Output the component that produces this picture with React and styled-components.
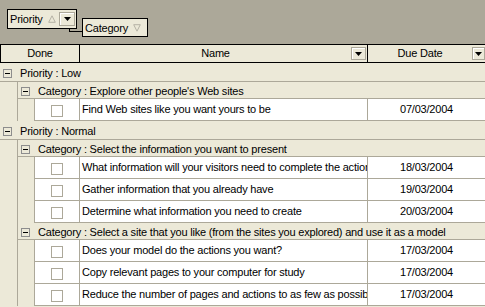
import React from 'react';
import styled, { createGlobalStyle } from 'styled-components';

const GlobalStyle = createGlobalStyle`
  html, body {
    margin: 0;
    padding: 0;
  }
  body {
    width: 485px;
    height: 307px;
    overflow: hidden;
    background: #ece9d8;
    font-family: 'Liberation Sans', Arial, sans-serif;
    font-size: 11px;
    letter-spacing: -0.2px;
    color: #000;
  }
`;

const GroupByPanel = styled.div`
  height: 44px;
  box-sizing: border-box;
  padding: 9px 0 0 7px;
  background: #aca899;
  display: flex;
  align-items: flex-start;
`;

const Chip = styled.div`
  position: relative;
  box-sizing: border-box;
  width: ${p => p.$width}px;
  height: ${p => p.$height}px;
  margin-top: ${p => p.$top || 0}px;
  margin-left: ${p => p.$left || 0}px;
  padding-left: 2px;
  border: 1px solid #000;
  background: #ece9d8;
  display: flex;
  align-items: center;

  ${p =>
    p.$linked &&
    `
    &::before {
      content: '';
      position: absolute;
      left: -14px;
      top: 9px;
      width: 12px;
      height: 3px;
      border-left: 1px solid #000;
      border-bottom: 1px solid #000;
    }
  `}
`;

const ChipLabel = styled.span`
  flex: 1;
  white-space: nowrap;
`;

const SortGlyph = styled.svg`
  display: block;
  flex: none;
  margin-right: ${p => p.$gap}px;
`;

const DropButton = styled.div`
  box-sizing: border-box;
  flex: none;
  width: ${p => p.$w}px;
  height: ${p => p.$h}px;
  margin-right: ${p => p.$right || 0}px;
  border: 1px solid #aca899;
  background: #ece9d8;
  box-shadow: inset 1px 1px 0 #fff;
  display: flex;
  align-items: center;
  justify-content: center;
`;

const HeaderRow = styled.div`
  display: flex;
  height: 19px;
  box-sizing: border-box;
  border-top: 1px solid #000;
  border-bottom: 1px solid #000;
  border-left: 1px solid #000;
`;

const HeaderCell = styled.div`
  box-sizing: border-box;
  width: ${p => (p.$width ? `${p.$width}px` : 'auto')};
  flex: ${p => (p.$width ? 'none' : 1)};
  border-right: ${p => (p.$last ? 'none' : '1px solid #000')};
  display: flex;
  align-items: center;
  line-height: 17px;
`;

const HeaderLabel = styled.span`
  flex: 1;
  text-align: center;
`;

const PriorityRow = styled.div`
  height: 19px;
  box-sizing: border-box;
  border-bottom: 1px solid #aca899;
  padding: 3px 0 0 3px;
  display: flex;
  align-items: center;
  line-height: 13px;
  white-space: nowrap;
`;

const CategoryRow = styled(PriorityRow)`
  height: 17px;
  padding-top: 2px;
`;

const Nested = styled.div`
  padding-left: ${p => p.$indent}px;
`;

const CategoryGroup = styled.div`
  border-left: 1px solid #aca899;
`;

const Expander = styled.span`
  box-sizing: border-box;
  flex: none;
  width: 9px;
  height: 9px;
  margin-right: 8px;
  border: 1px solid #8d8d8d;
  display: flex;
  align-items: center;
  justify-content: center;

  &::after {
    content: '';
    width: 5px;
    height: 1px;
    background: #000;
  }
`;

const TaskRow = styled.div`
  display: flex;
  height: 22px;
  box-sizing: border-box;
  border-left: 1px solid #aca899;
  border-bottom: 1px solid #aca899;
  background: #fff;
  line-height: 20px;
`;

const TaskCell = styled.div`
  box-sizing: border-box;
  width: ${p => (p.$width ? `${p.$width}px` : 'auto')};
  flex: ${p => (p.$width ? 'none' : 1)};
  min-width: 0;
  border-right: ${p => (p.$last ? 'none' : '1px solid #aca899')};
  padding-left: ${p => p.$pad || 0}px;
  text-align: ${p => p.$align || 'left'};
  white-space: nowrap;
  overflow: hidden;
  display: ${p => (p.$check ? 'flex' : 'block')};
  align-items: center;
  justify-content: center;
`;

const CheckBox = styled.span`
  box-sizing: border-box;
  width: 12px;
  height: 12px;
  margin-top: 3px;
  border: 1px solid #aca899;
  background: #fff;
`;

const DownArrow = () => (
  <svg width="7" height="4" viewBox="0 0 7 4">
    <path d="M0 0h7L3.5 4z" fill="#000" />
  </svg>
);

const groups = [
  {
    priority: 'Low',
    categories: [
      {
        name: "Explore other people's Web sites",
        tasks: [['Find Web sites like you want yours to be', '07/03/2004']]
      }
    ]
  },
  {
    priority: 'Normal',
    categories: [
      {
        name: 'Select the information you want to present',
        tasks: [
          ['What information will your visitors need to complete the actions?', '18/03/2004'],
          ['Gather information that you already have', '19/03/2004'],
          ['Determine what information you need to create', '20/03/2004']
        ]
      },
      {
        name: 'Select a site that you like (from the sites you explored) and use it as a model',
        tasks: [
          ['Does your model do the actions you want?', '17/03/2004'],
          ['Copy relevant pages to your computer for study', '17/03/2004'],
          ['Reduce the number of pages and actions to as few as possible', '17/03/2004']
        ]
      }
    ]
  }
];

export default function App() {
  return (
    <>
      <GlobalStyle />
      <GroupByPanel>
        <Chip $width={70} $height={20}>
          <ChipLabel>Priority</ChipLabel>
          <SortGlyph $gap={3} width="8" height="8" viewBox="0 0 8 8">
            <path d="M4 0.8L7.3 7.3H0.7z" fill="none" stroke="#b5b2a5" />
          </SortGlyph>
          <DropButton $w={16} $h={14} $right={1}>
            <DownArrow />
          </DropButton>
        </Chip>
        <Chip $width={66} $height={19} $top={9} $left={5} $linked>
          <ChipLabel>Category</ChipLabel>
          <SortGlyph $gap={6} width="8" height="8" viewBox="0 0 8 8">
            <path d="M4 7.2L7.3 0.7H0.7z" fill="none" stroke="#b5b2a5" />
          </SortGlyph>
        </Chip>
      </GroupByPanel>

      <HeaderRow>
        <HeaderCell $width={79}>
          <HeaderLabel>Done</HeaderLabel>
        </HeaderCell>
        <HeaderCell $width={288}>
          <HeaderLabel>Name</HeaderLabel>
          <DropButton $w={15} $h={13} $right={1}>
            <DownArrow />
          </DropButton>
        </HeaderCell>
        <HeaderCell $last>
          <HeaderLabel>Due Date</HeaderLabel>
          <DropButton $w={13} $h={13}>
            <DownArrow />
          </DropButton>
        </HeaderCell>
      </HeaderRow>

      {groups.map(group => (
        <div key={group.priority}>
          <PriorityRow>
            <Expander />
            Priority : {group.priority}
          </PriorityRow>
          <Nested $indent={17}>
            {group.categories.map(cat => (
              <CategoryGroup key={cat.name}>
                <CategoryRow>
                  <Expander />
                  Category : {cat.name}
                </CategoryRow>
                <Nested $indent={16}>
                  {cat.tasks.map(([name, due]) => (
                    <TaskRow key={name}>
                      <TaskCell $width={45} $check>
                        <CheckBox />
                      </TaskCell>
                      <TaskCell $width={288} $pad={2}>
                        {name}
                      </TaskCell>
                      <TaskCell $last $align="center">
                        {due}
                      </TaskCell>
                    </TaskRow>
                  ))}
                </Nested>
              </CategoryGroup>
            ))}
          </Nested>
        </div>
      ))}
    </>
  );
}
